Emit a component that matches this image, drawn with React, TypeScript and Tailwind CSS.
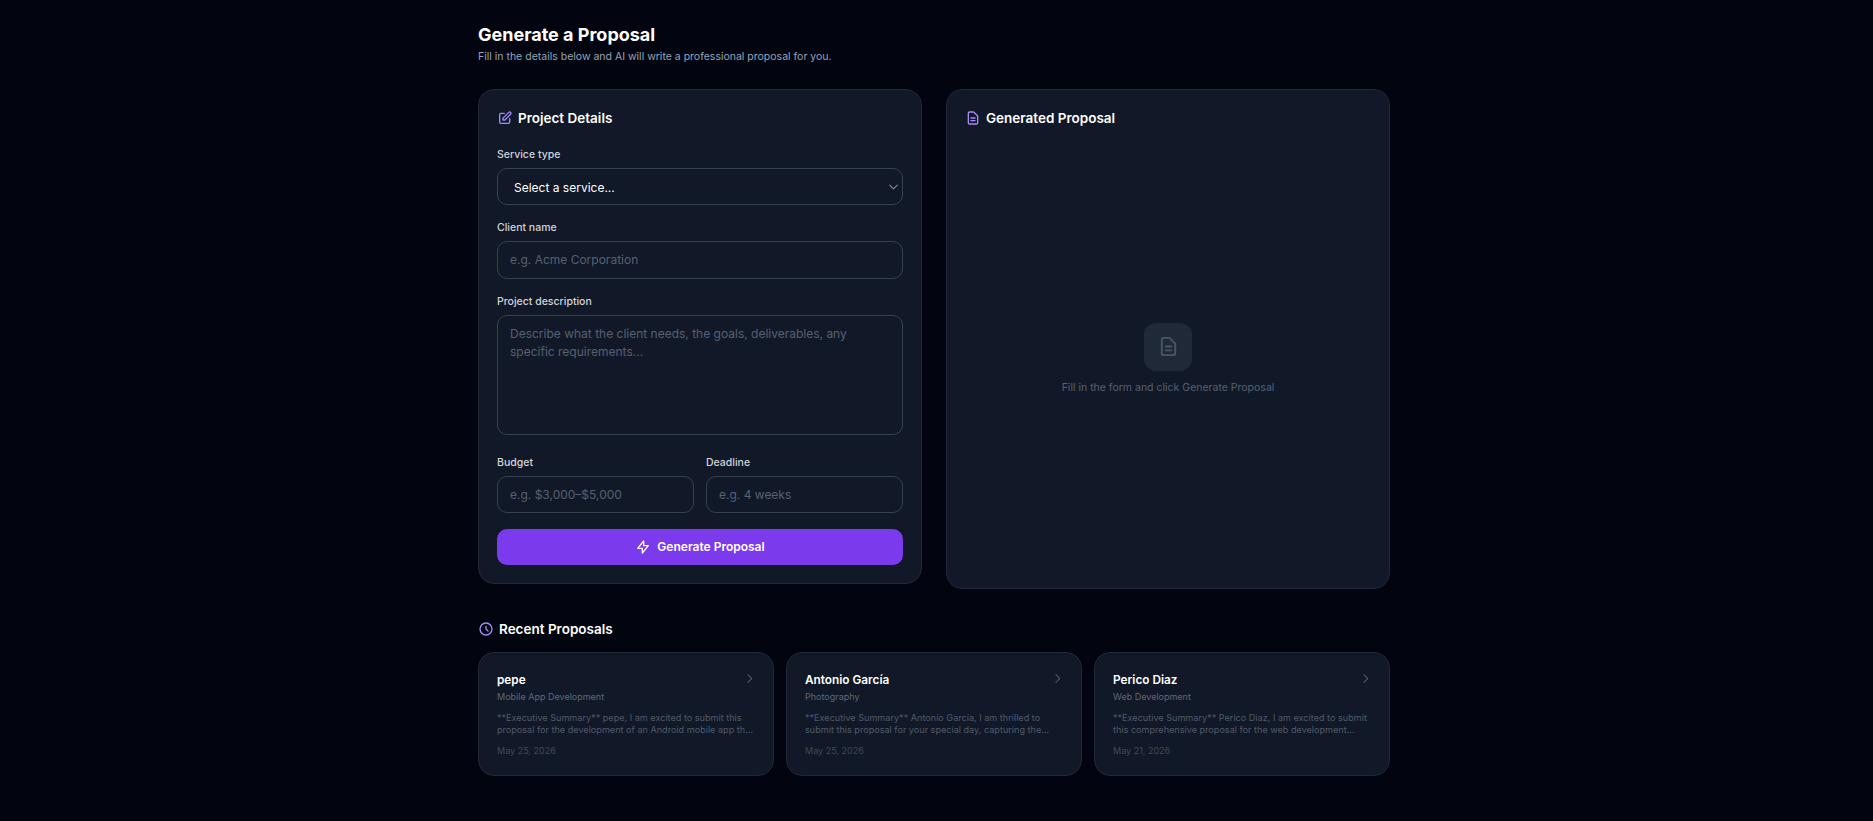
import { ChevronDown } from 'lucide-react';

const inputClass =
  'block w-full h-[37.5px] rounded-[10px] border border-[#374151] bg-transparent px-3 text-[12px] text-white outline-none placeholder:text-[#566173]';

const icons = {
  pencil: 'M11 5H6a2 2 0 00-2 2v11a2 2 0 002 2h11a2 2 0 002-2v-5m-1.414-9.414a2 2 0 112.828 2.828L11.828 15H9v-2.828l8.586-8.586z',
  document: 'M9 12h6m-6 4h6m2 5H7a2 2 0 01-2-2V5a2 2 0 012-2h5.586a1 1 0 01.707.293l5.414 5.414a1 1 0 01.293.707V19a2 2 0 01-2 2z',
  bolt: 'M13 10V3L4 14h7v7l9-11h-7z',
  clock: 'M12 8v4l3 3m6-3a9 9 0 11-18 0 9 9 0 0118 0z',
  chevron: 'M9 5l7 7-7 7',
};

function Icon({ name, className }: { name: keyof typeof icons; className: string }) {
  return (
    <svg viewBox="0 0 24 24" fill="none" stroke="currentColor" strokeWidth={2} strokeLinecap="round" strokeLinejoin="round" className={className}>
      <path d={icons[name]} />
    </svg>
  );
}

const recent = [
  {
    name: 'pepe',
    service: 'Mobile App Development',
    excerpt:
      '**Executive Summary** pepe, I am excited to submit this proposal for the development of an Android mobile app that meets all of your requirements and goals for the launch.',
    date: 'May 25, 2026',
  },
  {
    name: 'Antonio García',
    service: 'Photography',
    excerpt:
      '**Executive Summary** Antonio García, I am thrilled to submit this proposal for your special day, capturing the moments that matter most to you and your family and friends.',
    date: 'May 25, 2026',
  },
  {
    name: 'Perico Diaz',
    service: 'Web Development',
    excerpt:
      '**Executive Summary** Perico Diaz, I am excited to submit this comprehensive proposal for the web development project that your company has been planning this year.',
    date: 'May 21, 2026',
  },
];

function Label({ children }: { children: React.ReactNode }) {
  return <label className="mb-[5px] block pt-px text-[10.5px] leading-4 font-medium text-[#d1d5db]">{children}</label>;
}

function PanelTitle({ icon, children }: { icon: keyof typeof icons; children: React.ReactNode }) {
  return (
    <h2 className="flex items-center gap-[5px] text-[13.5px] leading-5 font-semibold text-white">
      <Icon name={icon} className="h-4 w-4 text-[#a78bfa]" />
      {children}
    </h2>
  );
}

export default function App() {
  return (
    <div className="min-h-screen bg-[#020510] pr-[5px] font-['Inter',sans-serif]">
      <div className="mx-auto w-[912px] pt-[21px] pb-[44px]">
        <h1 className="text-lg leading-7 font-bold text-white">Generate a Proposal</h1>
        <p className="mb-6 text-[10.5px] leading-4 text-[#94a3b8]">
          Fill in the details below and AI will write a professional proposal for you.
        </p>

        <div className="grid grid-cols-2 items-start gap-6">
          <div className="rounded-2xl border border-[#1f2937] bg-[#111827] p-[18px]">
            <div className="mb-[18px]">
              <PanelTitle icon="pencil">Project Details</PanelTitle>
            </div>

            <Label>Service type</Label>
            <div className="relative mb-[14px]">
              <select className="block h-[37px] w-full appearance-none rounded-[10px] border border-[#374151] bg-transparent px-4 pt-0.5 text-[12px] text-white outline-none">
                <option className="bg-[#111827]">Select a service...</option>
              </select>
              <ChevronDown className="pointer-events-none absolute top-1/2 right-[2px] h-[15px] w-[15px] -translate-y-1/2 text-[#7b8494]" />
            </div>

            <Label>Client name</Label>
            <input className={`${inputClass} mb-[14px]`} placeholder="e.g. Acme Corporation" />

            <Label>Project description</Label>
            <textarea
              className="mb-[13px] h-[120px] w-full resize-none rounded-[10px] border border-[#374151] bg-transparent px-3 py-[9px] text-[12px] leading-[18px] text-white outline-none placeholder:text-[#566173]"
              placeholder="Describe what the client needs, the goals, deliverables, any specific requirements..."
            />

            <div className="mb-4 grid grid-cols-2 gap-3">
              <div>
                <Label>Budget</Label>
                <input className={inputClass} placeholder="e.g. $3,000–$5,000" />
              </div>
              <div>
                <Label>Deadline</Label>
                <input className={inputClass} placeholder="e.g. 4 weeks" />
              </div>
            </div>

            <button className="flex h-9 w-full items-center justify-center gap-[6px] rounded-[10px] bg-[#7c3aed] text-[12px] font-semibold text-white">
              <Icon name="bolt" className="h-4 w-4" />
              Generate Proposal
            </button>
          </div>

          <div className="flex min-h-[500px] flex-col rounded-2xl border border-[#1f2937] bg-[#111827] p-[18px]">
            <PanelTitle icon="document">Generated Proposal</PanelTitle>
            <div className="mt-5 flex flex-1 flex-col items-center justify-center">
              <div className="mb-[9px] flex h-12 w-12 items-center justify-center rounded-xl bg-[#1f2937]">
                <Icon name="document" className="h-[23px] w-[23px] text-[#4b5563]" />
              </div>
              <p className="text-[10.5px] leading-4 text-[#566173]">Fill in the form and click Generate Proposal</p>
            </div>
          </div>
        </div>

        <div className="mt-[30px] mb-[13px]">
          <PanelTitle icon="clock">Recent Proposals</PanelTitle>
        </div>

        <div className="grid grid-cols-3 gap-3">
          {recent.map((item) => (
            <div key={item.name} className="rounded-2xl border border-[#1f2937] bg-[#111827] px-[18px] pt-[17px] pb-4">
              <div className="flex items-start justify-between">
                <div className="min-w-0">
                  <p className="mb-px text-[11.8px] leading-5 font-semibold text-white">{item.name}</p>
                  <p className="text-[9px] leading-3 text-[#5f6878]">{item.service}</p>
                </div>
                <Icon name="chevron" className="mt-[2px] -mr-px h-[13px] w-[13px] text-[#4b5563]" />
              </div>
              <p className="mt-[9px] line-clamp-2 text-[9.1px] leading-3 text-[#505a6a]">{item.excerpt}</p>
              <p className="mt-[7px] text-[9px] leading-4 text-[#3f4a5a]">{item.date}</p>
            </div>
          ))}
        </div>
      </div>
    </div>
  );
}
